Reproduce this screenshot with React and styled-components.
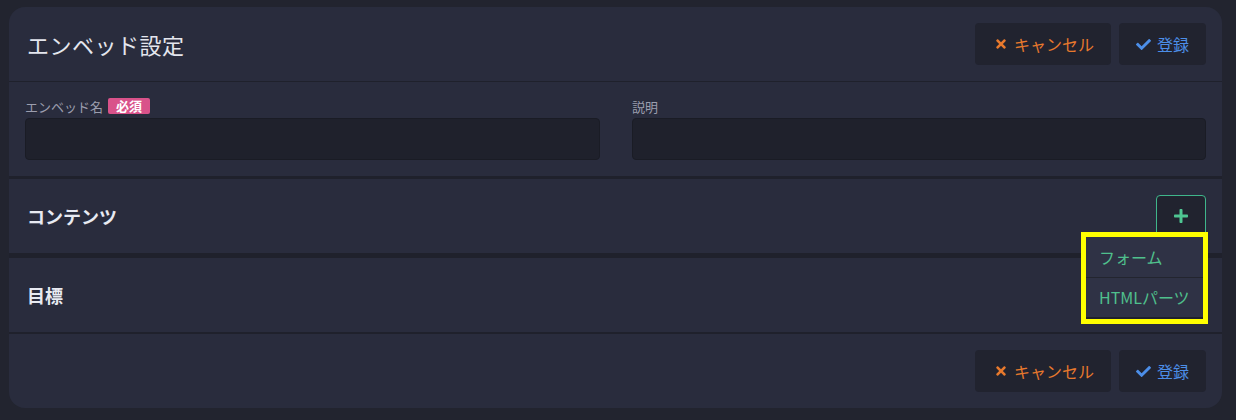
import React from "react";
import styled, { createGlobalStyle } from "styled-components";
import { FaTimes, FaCheck, FaPlus } from "react-icons/fa";

const Global = createGlobalStyle`
  html, body { margin: 0; padding: 0; background: #22242f; }
  body { font-family: "Noto Sans CJK JP", "Noto Sans", sans-serif; color: #e6e8f0; }
  * { box-sizing: border-box; }
`;

const Page = styled.div`
  padding: 7px 14px 12px 9px;
`;

const Card = styled.div`
  background: #292c3d;
  border-radius: 16px;
`;

const Header = styled.div`
  box-sizing: content-box;
  height: 74px;
  display: flex;
  align-items: center;
  justify-content: space-between;
  padding: 0 16px 0 18px;
  border-bottom: 1px solid #1f212c;
`;

const Title = styled.h1`
  margin: 0;
  font-size: 22px;
  font-weight: 400;
  color: #e4e6ee;
  letter-spacing: 0.5px;
`;

const Actions = styled.div`
  display: flex;
  gap: 8px;
`;

const Button = styled.button`
  height: 42px;
  padding: 0 ${p => p.$right || 17}px 0 ${p => p.$left || 19}px;
  display: flex;
  align-items: center;
  gap: 6px;
  background: #21232f;
  border: none;
  border-radius: 4px;
  color: ${p => p.$color};
  font-family: "Noto Sans CJK JP", sans-serif;
  font-size: 16px;
  cursor: pointer;
  svg { font-size: ${p => p.$icon || 14}px; }
`;

const FormSection = styled.div`
  display: grid;
  grid-template-columns: 575px 574px;
  column-gap: 32px;
  padding: 16px;
  border-bottom: 3px solid #1f212c;
`;

const Field = styled.div`
  display: flex;
  flex-direction: column;
  gap: 4px;
`;

const Label = styled.div`
  height: 16px;
  display: flex;
  align-items: center;
  gap: 5px;
  font-size: 13px;
  color: #9c9eae;
`;

const Badge = styled.span`
  background: #d9528a;
  color: #fff;
  font-size: 13px;
  font-weight: 700;
  height: 16px;
  line-height: 16px;
  padding: 0 8px;
  border-radius: 2px;
`;

const Input = styled.input`
  height: 42px;
  width: 100%;
  background: #1f212c;
  border: 1px solid #1a1c25;
  border-radius: 4px;
  color: #e6e8f0;
  padding: 0 12px;
  outline: none;
`;

const Section = styled.div`
  box-sizing: content-box;
  height: 74px;
  display: flex;
  align-items: center;
  justify-content: space-between;
  padding: 0 16px 0 18px;
  border-bottom: ${p => p.$sep || 0}px solid #1f212c;
`;

const SectionTitle = styled.h2`
  margin: 0;
  font-size: 18px;
  font-weight: 700;
  color: #e8eaf2;
`;

const Footer = styled.div`
  height: 74px;
  display: flex;
  align-items: center;
  justify-content: flex-end;
  padding: 0 16px;
`;

const AddWrap = styled.div`
  position: relative;
`;

const AddButton = styled.button`
  width: 50px;
  height: 43px;
  background: #21232f;
  border: 1px solid #3fb68b;
  border-radius: 4px;
  color: #4fc592;
  display: flex;
  align-items: center;
  justify-content: center;
  font-size: 16px;
  cursor: pointer;
`;

const Menu = styled.div`
  position: absolute;
  top: 37px;
  right: -2px;
  width: 127px;
  border: 5px solid #ffff00;
  background: #1f212c;
  padding-bottom: 2px;
  z-index: 5;
`;

const MenuItem = styled.div`
  height: 40px;
  display: flex;
  align-items: center;
  padding: 0 13px;
  background: #2f3245;
  color: #4fc08d;
  font-size: 16px;
  white-space: nowrap;
  & + & {
    border-top: 1px solid #23252f;
  }
`;

function FormActions() {
  return (
    <Actions>
      <Button $color="#e8792d">
        <FaTimes />
        キャンセル
      </Button>
      <Button $color="#4c8ee8" $left={17} $right={17} $icon={15}>
        <FaCheck />
        登録
      </Button>
    </Actions>
  );
}

export default function App() {
  return (
    <>
      <Global />
      <Page>
        <Card>
          <Header>
            <Title>エンベッド設定</Title>
            <FormActions />
          </Header>
          <FormSection>
            <Field>
              <Label>
                エンベッド名<Badge>必須</Badge>
              </Label>
              <Input />
            </Field>
            <Field>
              <Label>説明</Label>
              <Input />
            </Field>
          </FormSection>
          <Section $sep={5}>
            <SectionTitle>コンテンツ</SectionTitle>
            <AddWrap>
              <AddButton>
                <FaPlus />
              </AddButton>
              <Menu>
                <MenuItem>フォーム</MenuItem>
                <MenuItem>HTMLパーツ</MenuItem>
              </Menu>
            </AddWrap>
          </Section>
          <Section $sep={2}>
            <SectionTitle>目標</SectionTitle>
          </Section>
          <Footer>
            <FormActions />
          </Footer>
        </Card>
      </Page>
    </>
  );
}
